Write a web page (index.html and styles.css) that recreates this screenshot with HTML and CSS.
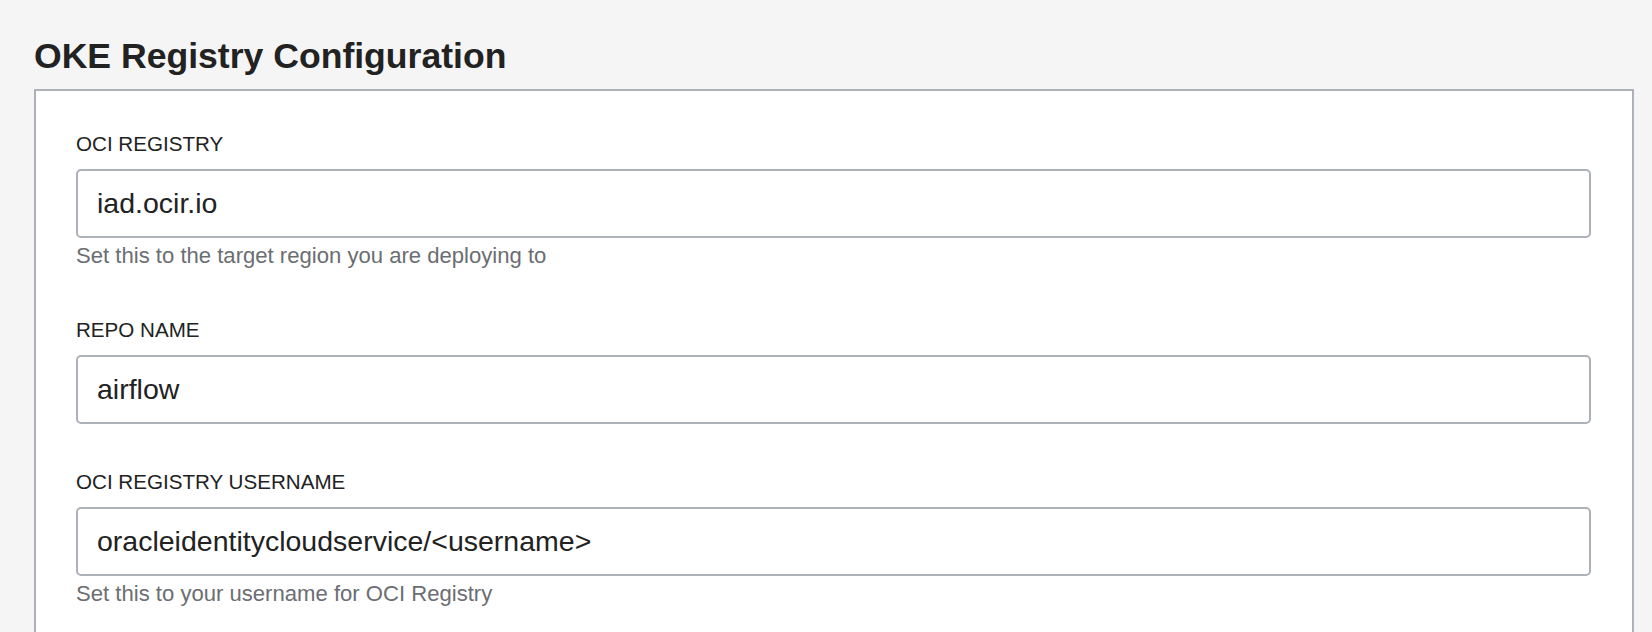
FILE: index.html
```html
<!DOCTYPE html>
<html lang="en">
<head>
<meta charset="utf-8">
<title>OKE Registry Configuration</title>
<link rel="stylesheet" href="styles.css">
</head>
<body>
<main class="page">
  <h1 class="title">OKE Registry Configuration</h1>
  <section class="panel">
    <div class="field">
      <label class="label" for="reg">OCI REGISTRY</label>
      <input class="input" id="reg" type="text" value="iad.ocir.io">
      <div class="help">Set this to the target region you are deploying to</div>
    </div>
    <div class="field">
      <label class="label" for="repo">REPO NAME</label>
      <input class="input" id="repo" type="text" value="airflow">
    </div>
    <div class="field">
      <label class="label" for="user">OCI REGISTRY USERNAME</label>
      <input class="input" id="user" type="text" value="oracleidentitycloudservice/&lt;username&gt;">
      <div class="help">Set this to your username for OCI Registry</div>
    </div>
  </section>
</main>
</body>
</html>
```
FILE: styles.css
```css
html, body {
  margin: 0;
  padding: 0;
  background: #f5f5f5;
  font-family: "Liberation Sans", Arial, Helvetica, sans-serif;
  color: #222222;
  overflow: hidden;
}

.page {
  padding: 35px 0 0 34px;
  width: 1600px;
}

.title {
  margin: 0 0 11px 0;
  font-size: 35.6px;
  line-height: 43px;
  font-weight: 700;
  color: #222222;
}

.panel {
  box-sizing: border-box;
  width: 1600px;
  background: #ffffff;
  border: 2px solid #adb1b8;
  border-bottom: none;
  padding: 41px 41px 60px 40px;
  min-height: 560px;
}

.field {
  display: flex;
  flex-direction: column;
  margin-bottom: 46px;
}

.label {
  font-size: 20.6px;
  line-height: 24px;
  color: #222222;
  margin-bottom: 13px;
}

.input {
  box-sizing: border-box;
  height: 69px;
  width: 100%;
  border: 2px solid #adb1b8;
  border-radius: 5px;
  padding: 0 19px;
  font-family: "Liberation Sans", Arial, Helvetica, sans-serif;
  font-size: 28.5px;
  color: #222222;
  background: #ffffff;
  outline: none;
}

.help {
  margin-top: 6px;
  margin-bottom: 4px;
  font-size: 22.1px;
  line-height: 24px;
  color: #6b6e72;
}
```
